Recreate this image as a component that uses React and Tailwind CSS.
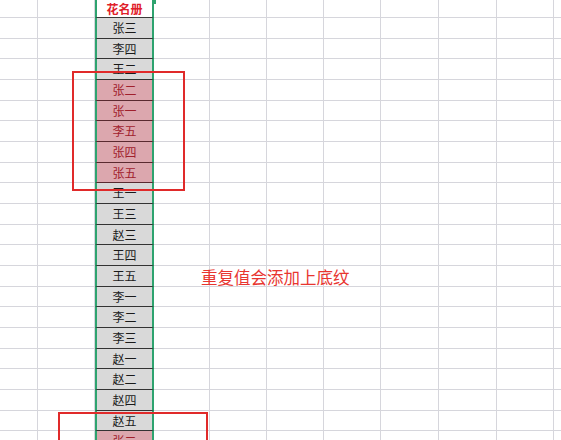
import React from "react";

const widths = [38, 57, 59, 56, 57, 57, 57, 58, 58, 57, 20];
const pattern = [21, 20, 21];
const names = [
  ["花名册", "h"],
  ["张三", "g"], ["李四", "g"], ["王二", "g"],
  ["张二", "p"], ["张一", "p"], ["李五", "p"], ["张四", "p"], ["张五", "p"],
  ["王一", "g"], ["王三", "g"], ["赵三", "g"], ["王四", "g"], ["王五", "g"],
  ["李一", "g"], ["李二", "g"], ["李三", "g"], ["赵一", "g"], ["赵二", "g"],
  ["赵四", "g"], ["赵五", "g"], ["张二", "p"],
];

function DataCell({ text, kind }) {
  if (kind === "h") {
    return (
      <div className="h-full border-x-2 border-b border-x-[#2ea36f] border-b-[#3a3a3a] bg-white flex items-center justify-center text-[12px] font-bold text-[#e0202a]">
        {text}
      </div>
    );
  }
  if (kind === "p") {
    return (
      <div className="h-full border-x-2 border-b border-x-[#2ea36f] border-b-[#5a2a30] bg-[#dca7ae] flex items-center justify-center text-[12px] text-[#a0202c]">
        {text}
      </div>
    );
  }
  return (
    <div className="h-full border-x-2 border-b border-x-[#2ea36f] border-b-[#333333] bg-[#d9d9d9] flex items-center justify-center text-[12px] text-[#1a1a1a]">
      {text}
    </div>
  );
}

export default function App() {
  return (
    <div
      className="relative w-[561px] h-[440px] overflow-hidden bg-white"
      style={{ fontFamily: '"Noto Sans CJK SC", "Noto Sans", sans-serif' }}
    >
      <div className="flex flex-col">
        {names.map(([text, kind], r) => {
          const h = r === 0 ? 18 : pattern[(r - 1) % 3];
          return (
            <div key={r} className="flex shrink-0" style={{ height: h }}>
              {widths.map((w, c) => (
                <div key={c} className="shrink-0" style={{ width: w }}>
                  {c === 2 ? (
                    <DataCell text={text} kind={kind} />
                  ) : (
                    <div className="h-full border-r border-b border-[#d6d6dc]" />
                  )}
                </div>
              ))}
            </div>
          );
        })}
      </div>

      <div className="absolute left-[152px] top-0 w-[4px] h-[4px] bg-[#2ea36f]" />

      <div className="absolute left-[72px] top-[71px] w-[113px] h-[120px] border-2 border-[#e02a2a]" />
      <div className="absolute left-[58px] top-[412px] w-[150px] h-[60px] border-2 border-[#e02a2a]" />

      <div className="absolute left-[201px] top-[266px] text-[16.5px] leading-[22px] text-[#e8352f] whitespace-nowrap">
        重复值会添加上底纹
      </div>
    </div>
  );
}
